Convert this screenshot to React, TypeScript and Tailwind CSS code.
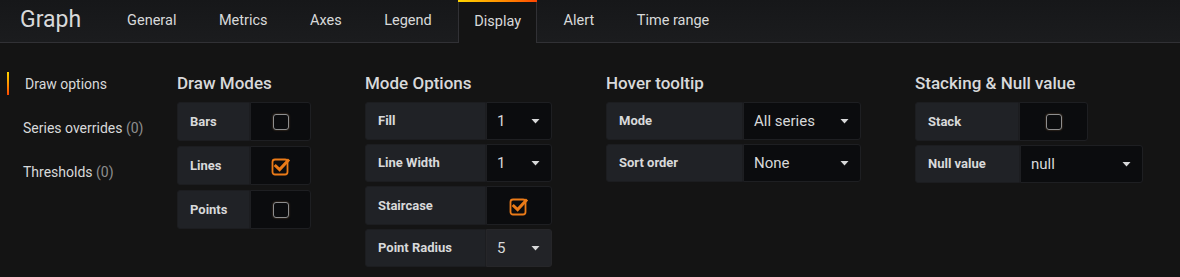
import React from "react";

const Caret = () => (
  <svg width="9" height="5" viewBox="0 0 9 5" className="shrink-0">
    <path d="M0.5 0 L8.5 0 L4.5 4.5 Z" fill="#d8d9da" />
  </svg>
);

const Check = ({ checked }: { checked: boolean }) =>
  checked ? (
    <svg width="20" height="20" viewBox="0 0 20 20">
      <rect x="1.5" y="3.5" width="15" height="15" rx="2.5" fill="none" stroke="#eb7b18" strokeWidth="1.8" />
      <path d="M4.8 10 L8.6 13.6 L17 4.6" fill="none" stroke="#eb7b18" strokeWidth="3" strokeLinecap="square" />
    </svg>
  ) : (
    <div className="w-[16px] h-[16px] rounded-[3px] border-[1.6px] border-[#8e8e8e] shadow-[0_0_2px_rgba(200,140,80,0.5)]" />
  );

const Row = ({
  label,
  lw,
  vw,
  children,
  value,
  light,
  h = 39,
}: {
  label: string;
  lw: number;
  vw: number;
  children?: React.ReactNode;
  value?: string;
  light?: boolean;
  h?: number;
}) => (
  <div className="flex" style={{ height: h }}>
    <div
      className="flex items-center pl-[12px] bg-[#202226] rounded-l-[3px] text-[13px] font-bold text-[#d8d9da] border border-[#1c1d20]"
      style={{ width: lw }}
    >
      {label}
    </div>
    <div
      className={
        "flex items-center rounded-r-[3px] border " +
        (light ? "bg-[#222327] border-[#262629]" : "bg-[#0b0c0e] border-[#1e1f22]")
      }
      style={{ width: vw }}
    >
      {value !== undefined ? (
        <div className="flex w-full items-center justify-between pl-[10px] pr-[11px] text-[15px] text-[#d8d9da]">
          <span>{value}</span>
          <Caret />
        </div>
      ) : (
        <div className="flex w-full items-center justify-center">{children}</div>
      )}
    </div>
  </div>
);

const Section = ({ title, children, gap }: { title: string; children: React.ReactNode; gap: string }) => (
  <div className="pt-[22px]">
    <div className="h-[37px] flex items-center text-[17px] font-medium text-[#d8d9da] leading-none pb-[1px]">
      {title}
    </div>
    <div className={"flex flex-col " + gap}>{children}</div>
  </div>
);

export default function App() {
  const tabs = ["General", "Metrics", "Axes", "Legend", "Display", "Alert", "Time range"];
  return (
    <div className="w-[1180px] h-[277px] bg-[#141414] font-['Roboto',sans-serif] text-[#d8d9da] overflow-hidden">
      <div className="flex items-end h-[43px] border-b border-[#313135] bg-gradient-to-b from-[#161719] to-[#1b1c1e]">
        <div className="self-stretch flex items-center pl-[20px] pr-[30px] text-[23px] text-[#d8d9da] pb-[1px]">Graph</div>
        <div className="flex gap-[10.5px] h-full">
          {tabs.map((t) =>
            t === "Display" ? (
              <div
                key={t}
                className="relative -mb-px h-[43px] flex items-center px-[15px] bg-[#141414] border-x border-[#313135] text-[14.5px] text-[#d8d9da]"
              >
                <div className="absolute -left-px -right-px top-0 h-[2px] bg-gradient-to-r from-[#ffd500] to-[#ff4400]" />
                {t}
              </div>
            ) : (
              <div key={t} className="h-full flex items-center px-[16px] text-[14.5px] text-[#d8d9da]">
                {t}
              </div>
            )
          )}
        </div>
      </div>
      <div className="flex">
        <div className="w-[177px] pt-[19px] text-[14px]">
          <div className="relative h-[44px] flex items-center pl-[25px]">
            <div className="absolute left-[7px] top-[10px] w-[2px] h-[23px] bg-gradient-to-b from-[#ffd500] to-[#ff4400]" />
            Draw options
          </div>
          <div className="h-[44px] flex items-center pl-[23px]">
            Series overrides&nbsp;<span className="text-[#8e8e8e]">(0)</span>
          </div>
          <div className="h-[44px] flex items-center pl-[23px]">
            Thresholds&nbsp;<span className="text-[#8e8e8e]">(0)</span>
          </div>
        </div>
        <div className="flex gap-[54px]">
          <Section title="Draw Modes" gap="gap-[5px]">
            <Row label="Bars" lw={73} vw={61}>
              <Check checked={false} />
            </Row>
            <Row label="Lines" lw={73} vw={61}>
              <Check checked={true} />
            </Row>
            <Row label="Points" lw={73} vw={61}>
              <Check checked={false} />
            </Row>
          </Section>
          <Section title="Mode Options" gap="gap-[4px]">
            <Row label="Fill" lw={121} vw={66} value="1" h={38} />
            <Row label="Line Width" lw={121} vw={66} value="1" h={38} />
            <Row label="Staircase" lw={121} vw={66}>
              <Check checked={true} />
            </Row>
            <Row label="Point Radius" lw={121} vw={66} value="5" light h={38} />
          </Section>
          <Section title="Hover tooltip" gap="gap-[4px]">
            <Row label="Mode" lw={137} vw={118} value="All series" h={38} />
            <Row label="Sort order" lw={137} vw={118} value="None" h={38} />
          </Section>
          <Section title="Stacking & Null value" gap="gap-[4px]">
            <Row label="Stack" lw={104} vw={69}>
              <Check checked={false} />
            </Row>
            <Row label="Null value" lw={105} vw={123} value="null" h={38} />
          </Section>
        </div>
      </div>
    </div>
  );
}
